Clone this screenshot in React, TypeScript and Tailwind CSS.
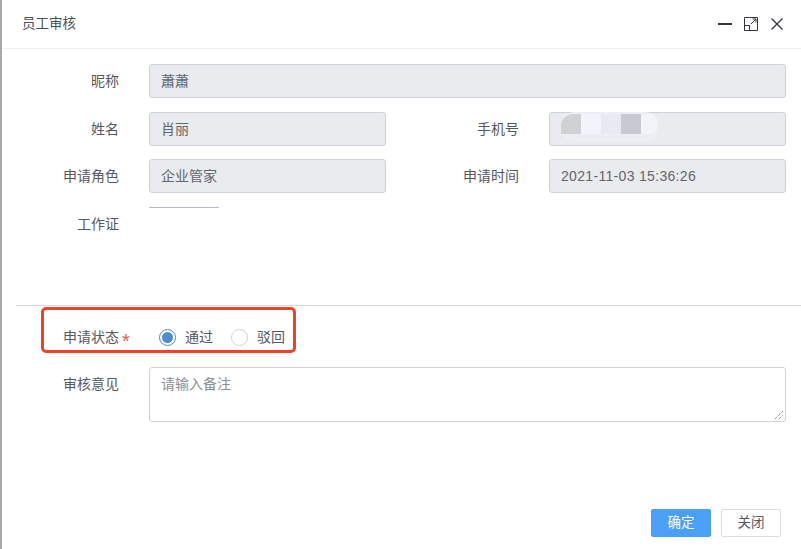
const font = { fontFamily: '"Liberation Sans", "Noto Sans CJK SC", sans-serif' };

function Label({ children, required }: { children: string; required?: boolean }) {
  return (
    <div className="relative w-[117px] shrink-0 text-right text-sm leading-[34px] text-[#55595f]">
      {children}
      {required && (
        <span className="absolute left-[120px] top-[4px] text-[20px] leading-[34px] text-[#ee5a48]">*</span>
      )}
    </div>
  );
}

function ReadOnly({ value, className }: { value?: string; className: string }) {
  return (
    <div
      className={`ml-[30px] h-[33.5px] rounded-[3px] border border-[#cdd1d9] bg-[#eaebef] px-[11px] text-sm leading-[32px] text-[#63666b] ${className}`}
    >
      {value}
    </div>
  );
}

function Radio({ label, checked }: { label: string; checked?: boolean }) {
  return (
    <div className="flex items-center">
      <span
        className={`flex h-[17px] w-[17px] items-center justify-center rounded-full border bg-white ${
          checked ? "border-[#4a8ad0]" : "border-[#cfd1d6]"
        }`}
      >
        {checked && <span className="h-[11px] w-[11px] rounded-full bg-[#4f8dcf]" />}
      </span>
      <span className="ml-[9px] text-sm text-[#55595f]">{label}</span>
    </div>
  );
}

export default function App() {
  return (
    <div
      className="relative flex h-[549px] w-[801px] flex-col overflow-hidden border-l-2 border-[#a9a9a9] bg-white"
      style={font}
    >
      <div className="flex h-[49px] shrink-0 items-center justify-between border-b border-[#eff0f2] pl-[20px] pr-[18px]">
        <span className="pt-px text-[13.5px] text-[#4b4f56]">员工审核</span>
        <div className="flex items-center text-[#33363f]">
          <svg width="14" height="14" viewBox="0 0 14 14" className="mr-[12px]">
            <rect x="0" y="6" width="14" height="2" fill="currentColor" />
          </svg>
          <svg width="14" height="14" viewBox="0 0 14 14" fill="none" stroke="currentColor" className="mr-[13px]">
            <path d="M5.5 .5H13.5V13.5H5.5M5.5 .5H.5V8.5" />
            <rect x=".5" y="8.5" width="5" height="5" />
            <path d="M7 7L12 2M8.5 2H12V5.5" />
          </svg>
          <svg width="12" height="12" viewBox="0 0 12 12" fill="none" stroke="currentColor" strokeWidth="1.3">
            <path d="M.5 .5L11.5 11.5M11.5 .5L.5 11.5" />
          </svg>
        </div>
      </div>

      <div className="flex flex-col pr-[15px] pt-[15px]">
        <div className="flex">
          <Label>昵称</Label>
          <ReadOnly value="蕭蕭" className="h-[34px] flex-1 !leading-[33px]" />
        </div>

        <div className="mt-[14px] grid grid-cols-[398px_1fr]">
          <div className="flex">
            <Label>姓名</Label>
            <ReadOnly value="肖丽" className="w-[237px]" />
          </div>
          <div className="flex">
            <div className="w-[119px] shrink-0 text-right text-sm leading-[34px] text-[#55595f]">手机号</div>
            <div className="relative ml-[30px] h-[33.5px] flex-1 rounded-[3px] border border-[#cdd1d9] bg-[#eaebef]">
              <div className="absolute left-[11px] top-[-1px] h-[30px] w-[98px] rounded-[14px] bg-[#eceef3]" />
              <div className="absolute left-[11px] top-[1px] flex h-[20px] overflow-hidden rounded-r-[9px] rounded-tl-[12px]">
                <span className="w-[20px] bg-[#d0d1d5]" />
                <span className="w-[20px] bg-[#f2f4fb]" />
                <span className="w-[20px] bg-[#e8eaf2]" />
                <span className="w-[20px] bg-[#c8cad3]" />
                <span className="w-[17px] bg-[#f2f4fa]" />
              </div>
            </div>
          </div>
        </div>

        <div className="mt-[13px] grid grid-cols-[398px_1fr]">
          <div className="flex">
            <Label>申请角色</Label>
            <ReadOnly value="企业管家" className="h-[34px] w-[237px]" />
          </div>
          <div className="flex">
            <div className="w-[119px] shrink-0 text-right text-sm leading-[34px] text-[#55595f]">申请时间</div>
            <ReadOnly value="2021-11-03 15:36:26" className="h-[34px] flex-1 tracking-[0.32px]" />
          </div>
        </div>

        <div className="mt-[14px] flex h-[98px]">
          <div className="w-[117px] shrink-0 pt-[7px] text-right text-sm leading-[20px] text-[#55595f]">工作证</div>
          <div className="ml-[30px] h-px w-[70px] bg-[#b5bccb]" />
        </div>
      </div>

      <div className="ml-[14px] h-px bg-[#d9d9d9]" />

      <div className="mt-[14px] flex h-[34px] items-center">
        <Label required>申请状态</Label>
        <div className="ml-[40px] flex gap-[18px]">
          <Radio label="通过" checked />
          <Radio label="驳回" />
        </div>
      </div>

      <div className="mt-[13px] flex pr-[15px]">
        <div className="w-[117px] shrink-0 text-right text-sm leading-[34px] text-[#55595f]">审核意见</div>
        <div className="relative ml-[30px] h-[55px] flex-1 rounded-[3px] border border-[#cfd1d6] px-[11px] py-[6px] text-sm leading-[20px] text-[#8c8f94]">
          请输入备注
          <svg width="9" height="9" viewBox="0 0 9 9" className="absolute bottom-[1px] right-[1px]" stroke="#666" fill="none" strokeDasharray="1 1">
            <path d="M0 8L8 0M4 8L8 4" />
          </svg>
        </div>
      </div>

      <div className="mt-auto flex justify-end gap-[10px] pb-[12px] pr-[20px]">
        <button className="h-[28px] w-[60px] rounded-[2px] bg-[#4aa0f7] text-[13.5px] text-white">确定</button>
        <button className="h-[28px] w-[60px] rounded-[2px] border border-[#dcdee2] bg-white text-[13.5px] text-[#55595f]">关闭</button>
      </div>

      <div className="absolute left-[39px] top-[307px] h-[46px] w-[255px] rounded-[5px] border-[3px] border-[#ee4328]" />
    </div>
  );
}
